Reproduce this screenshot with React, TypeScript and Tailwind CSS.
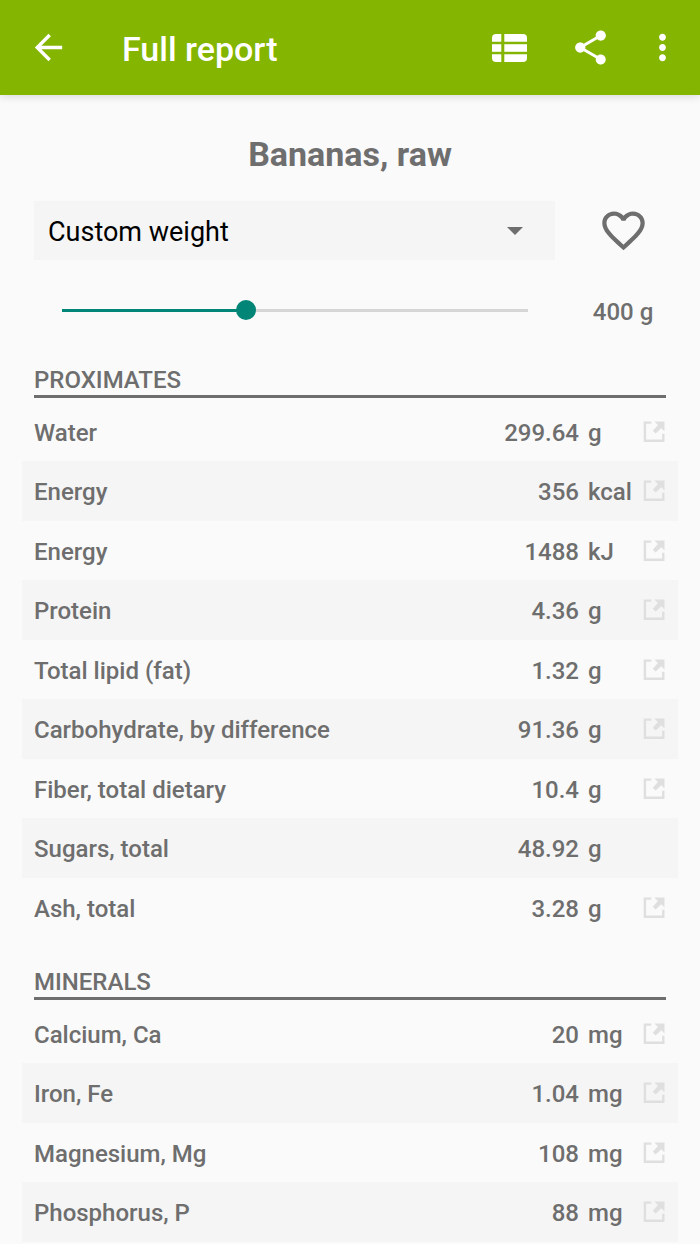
import { useState, type CSSProperties } from "react";
import { MdArrowBack, MdFavoriteBorder, MdMoreVert, MdShare } from "react-icons/md";

type Nutrient = { name: string; per100g: number; unit: string; link?: boolean };
type Section = { title: string; rows: Nutrient[] };

const sections: Section[] = [
  {
    title: "PROXIMATES",
    rows: [
      { name: "Water", per100g: 74.91, unit: "g", link: true },
      { name: "Energy", per100g: 89, unit: "kcal", link: true },
      { name: "Energy", per100g: 372, unit: "kJ", link: true },
      { name: "Protein", per100g: 1.09, unit: "g", link: true },
      { name: "Total lipid (fat)", per100g: 0.33, unit: "g", link: true },
      { name: "Carbohydrate, by difference", per100g: 22.84, unit: "g", link: true },
      { name: "Fiber, total dietary", per100g: 2.6, unit: "g", link: true },
      { name: "Sugars, total", per100g: 12.23, unit: "g" },
      { name: "Ash, total", per100g: 0.82, unit: "g", link: true },
    ],
  },
  {
    title: "MINERALS",
    rows: [
      { name: "Calcium, Ca", per100g: 5, unit: "mg", link: true },
      { name: "Iron, Fe", per100g: 0.26, unit: "mg", link: true },
      { name: "Magnesium, Mg", per100g: 27, unit: "mg", link: true },
      { name: "Phosphorus, P", per100g: 22, unit: "mg", link: true },
    ],
  },
];

const MIN = 10;
const MAX = 1000;

function ListIcon() {
  return (
    <svg viewBox="0 0 35 28" className="h-7 w-[35px]" fill="currentColor" aria-hidden="true">
      <path d="M4 0H9.3V7.7H0V4A4 4 0 0 1 4 0Z" />
      <path d="M12.3 0H31A4 4 0 0 1 35 4V7.7H12.3Z" />
      <path d="M0 10.2H9.3V17.8H0Z" />
      <path d="M12.3 10.2H35V17.8H12.3Z" />
      <path d="M0 20.3H9.3V28H4A4 4 0 0 1 0 24Z" />
      <path d="M12.3 20.3H35V24A4 4 0 0 1 31 28H12.3Z" />
    </svg>
  );
}

function OpenIcon() {
  return (
    <svg viewBox="0 0 22 22" className="size-[22px]" aria-hidden="true">
      <path d="M8.3 1.6H1.9V19.8H20.3V12.8" fill="none" stroke="currentColor" strokeWidth="2.4" />
      <path d="M11.4 0.4H21.5V10.4L18.3 7.3L12.6 12.6L9.8 9.8L14.9 4Z" fill="currentColor" />
    </svg>
  );
}

function NutrientSection({ section, weight }: { section: Section; weight: number }) {
  return (
    <section className="mb-8">
      <h2 className="mx-3 mb-1 border-b-3 border-[#6e6e6e] pb-0.5 text-2xl leading-[26px] font-medium">
        {section.title}
      </h2>
      <table className="w-full table-fixed border-collapse text-2xl leading-8 font-medium">
        <colgroup>
          <col />
          <col className="w-36" />
          <col className="w-16" />
          <col className="w-[35px]" />
        </colgroup>
        <tbody>
          {section.rows.map((row) => (
            <tr key={row.name + row.unit} className="h-[59px] even:h-[60px] even:bg-[#f5f5f5]">
              <th scope="row" className="pt-0.5 pr-0 pb-0 pl-3 text-left font-medium whitespace-nowrap">
                {row.name}
              </th>
              <td className="px-0 pt-0.5 pb-0 text-right">
                {Number(((row.per100g * weight) / 100).toFixed(2))}
              </td>
              <td className="pt-0.5 pr-0 pb-0 pl-[9px]">{row.unit}</td>
              <td className="p-0">
                {row.link && (
                  <a href="#details" aria-label={`Details for ${row.name}`} className="block w-[22px] text-[#dfdfdf]">
                    <OpenIcon />
                  </a>
                )}
              </td>
            </tr>
          ))}
        </tbody>
      </table>
    </section>
  );
}

export default function App() {
  const [weight, setWeight] = useState(400);
  const percent = ((weight - MIN) / (MAX - MIN)) * 100;
  const track: CSSProperties = {
    backgroundImage: `linear-gradient(to right, #008577 ${percent}%, #d6d6d6 ${percent}%)`,
  };

  return (
    <div className="min-h-screen bg-[#fafafa] font-['Roboto',sans-serif] text-[#6e6e6e]">
      <header className="flex h-[95px] items-center bg-[#84b500] pr-[17px] pl-7 text-white shadow-[0_2px_8px_rgba(0,0,0,0.12)]">
        <button type="button" aria-label="Back">
          <MdArrowBack size={41} />
        </button>
        <h1 className="ml-[53px] flex-1 pt-0.5 text-[34px] leading-10 font-medium">Full report</h1>
        <div className="flex items-center">
          <button type="button" aria-label="List view">
            <ListIcon />
          </button>
          <button type="button" aria-label="Share" className="ml-[43px]">
            <MdShare size={41} />
          </button>
          <button type="button" aria-label="More options" className="ml-[31px]">
            <MdMoreVert size={41} />
          </button>
        </div>
      </header>

      <main className="px-[22px] pt-[39px]">
        <h2 className="text-center text-[34px] leading-10 font-bold">Bananas, raw</h2>

        <div className="mt-[27px] flex items-center pl-3">
          <div className="relative flex-1">
            <select
              aria-label="Serving"
              className="h-[59px] w-full appearance-none bg-[#f5f5f5] px-3.5 pt-[3px] text-[27px] text-black"
            >
              <option>Custom weight</option>
              <option>100 g</option>
            </select>
            <svg
              viewBox="0 0 16 8"
              className="pointer-events-none absolute top-1/2 right-8 h-2 w-4 -translate-y-1/2"
              fill="currentColor"
              aria-hidden="true"
            >
              <path d="M0 0H16L8 8Z" />
            </svg>
          </div>
          <div className="ml-[13px] flex w-[110px] justify-center">
            <button type="button" aria-label="Add to favourites">
              <MdFavoriteBorder size={51} />
            </button>
          </div>
        </div>

        <div className="mt-8 flex h-9 items-center pl-[30px]">
          <input
            id="weight"
            type="range"
            aria-label="Weight in grams"
            min={MIN}
            max={MAX}
            value={weight}
            onChange={(e) => setWeight(Number(e.target.value))}
            style={track}
            className="h-5 min-w-0 flex-1 appearance-none bg-[length:calc(100%-20px)_3px] bg-center bg-no-repeat [&::-webkit-slider-thumb]:size-5 [&::-webkit-slider-thumb]:appearance-none [&::-webkit-slider-thumb]:rounded-full [&::-webkit-slider-thumb]:bg-[#008577]"
          />
          <output htmlFor="weight" className="ml-[30px] w-[110px] pt-1 text-center text-2xl leading-8 font-medium">
            {weight} g
          </output>
        </div>

        <div className="mt-[39px]">
          {sections.map((section) => (
            <NutrientSection key={section.title} section={section} weight={weight} />
          ))}
        </div>
      </main>
    </div>
  );
}
